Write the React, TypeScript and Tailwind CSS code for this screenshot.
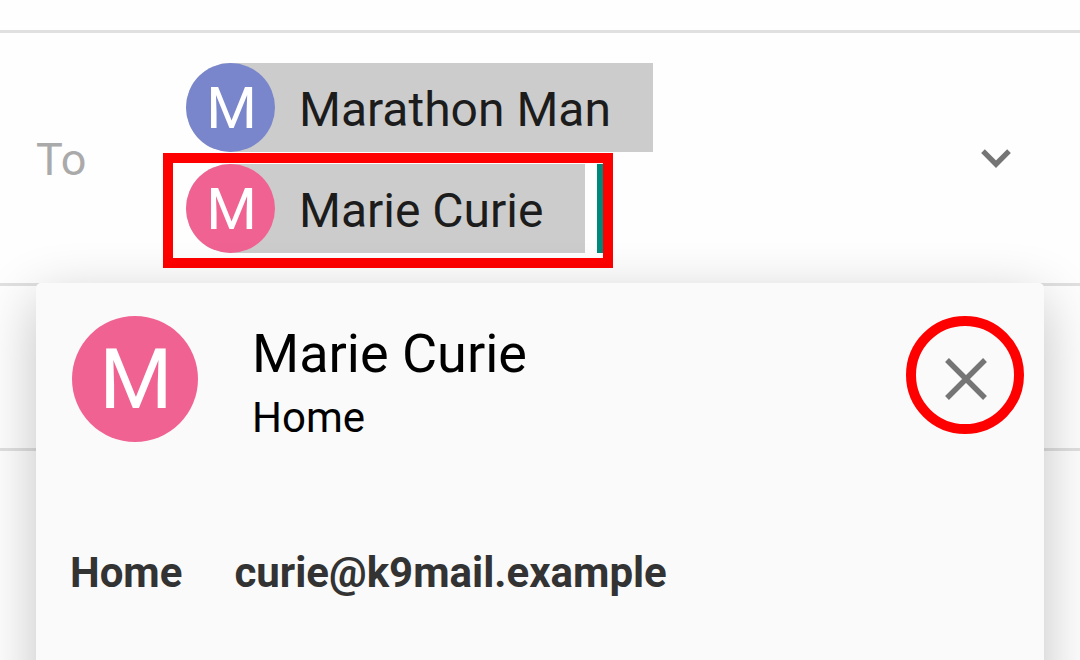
import React from "react";

type Contact = { name: string; color: string };

const recipients: Contact[] = [
  { name: "Marathon Man", color: "bg-[#7986cb]" },
  { name: "Marie Curie", color: "bg-[#f06292]" },
];

function Chip({ name, color }: Contact) {
  return (
    <button
      type="button"
      className="flex h-[89px] items-center rounded-l-full bg-[#cccccc] pr-[42px] text-left text-[48px] leading-[56px] text-[#1c1c1c]"
    >
      <span className={`flex size-[89px] items-center justify-center rounded-full pl-0.5 text-[58px] text-white ${color}`}>
        {name[0]}
      </span>
      <span className="ml-6 pt-1">{name}</span>
    </button>
  );
}

export default function App() {
  return (
    <main className="relative h-screen overflow-hidden bg-[#fefefe] font-[Roboto,sans-serif]">
      <div className="h-[33px] border-b-[3px] border-[#e0e0e0]" />
      <section className="flex h-[253px] items-center border-b-[3px] border-[#e0e0e0] pr-[60px] pl-9">
        <span className="w-[150px] pt-1 text-[45px] text-[#aaaaaa]">To</span>
        <div className="flex flex-1 flex-col items-start gap-3">
          <Chip {...recipients[0]} />
          <div className="relative flex items-center gap-3">
            <Chip {...recipients[1]} />
            <span className="h-[89px] w-[6px] bg-[#00897b]" />
            <span className="pointer-events-none absolute -top-[11px] -right-[10px] -bottom-[15px] -left-[23px] border-[10px] border-[#ff0000]" />
          </div>
        </div>
        <button type="button" aria-label="Expand recipients" className="w-12">
          <svg viewBox="0 0 48 48" className="size-12" fill="none" stroke="#757575" strokeWidth="5.2">
            <path d="M11 17.2L24 30.2L37 17.2" />
          </svg>
        </button>
      </section>
      <div className="h-[165px] border-b-[3px] border-[#e0e0e0]" />

      <section
        role="dialog"
        aria-label="Marie Curie"
        className="absolute inset-x-9 top-[283px] -bottom-24 rounded-[5px] bg-[#fafafa] shadow-[0_16px_56px_rgba(0,0,0,0.24)]"
      >
        <header className="flex items-start px-9 pt-[33px]">
          <span className="flex size-[126px] items-center justify-center rounded-full bg-[#f06292] pt-0.5 pl-0.5 text-[84px] text-white">
            M
          </span>
          <div className="ml-[54px] flex-1 pt-[5px] text-black">
            <h1 className="text-[54px] leading-[66px]">Marie Curie</h1>
            <p className="text-[42px] leading-[62px]">Home</p>
          </div>
          <button
            type="button"
            aria-label="Remove recipient"
            className="-mr-4 flex size-[118px] items-center justify-center rounded-full border-[10px] border-[#ff0000] pt-2 pl-0.5"
          >
            <svg viewBox="0 0 42 42" className="size-[42px]" fill="none" stroke="#757575" strokeWidth="5.4">
              <path d="M2 2L40 40M40 2L2 40" />
            </svg>
          </button>
        </header>
        <dl className="mt-24 flex gap-[52px] px-[34px] text-[42px] leading-[56px] font-bold text-[#333333]">
          <dt>Home</dt>
          <dd>curie@k9mail.example</dd>
        </dl>
      </section>
    </main>
  );
}
